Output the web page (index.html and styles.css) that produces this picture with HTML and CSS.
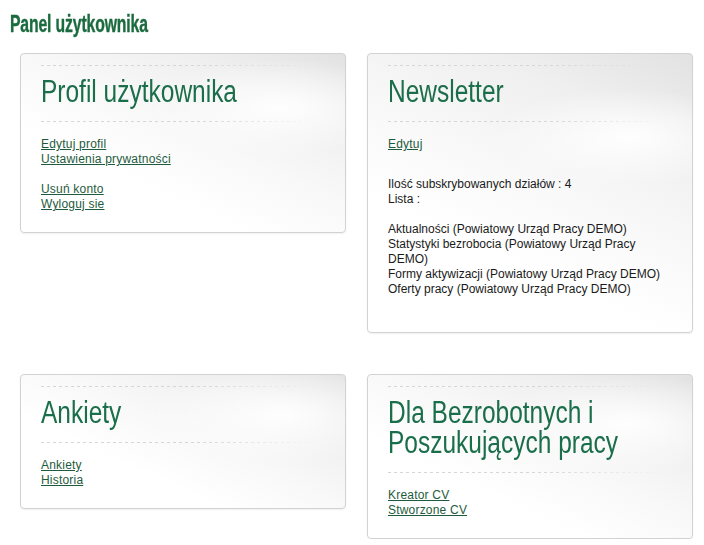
FILE: index.html
```html
<!DOCTYPE html>
<html lang="pl">
<head>
<meta charset="utf-8">
<title>Panel użytkownika</title>
<link rel="stylesheet" href="styles.css">
</head>
<body>
<h1 class="page-title"><span class="narrow-bold">Panel użytkownika</span></h1>
<div class="grid">
  <section class="card">
    <div class="card-head"><h2 class="card-title">Profil użytkownika</h2></div>
    <div class="card-body">
      <a href="#">Edytuj profil</a><br>
      <a href="#">Ustawienia prywatności</a><br>
      <br>
      <a href="#">Usuń konto</a><br>
      <a href="#">Wyloguj sie</a>
    </div>
  </section>
  <section class="card">
    <div class="card-head"><h2 class="card-title">Newsletter</h2></div>
    <div class="card-body">
      <a href="#">Edytuj</a>
      <p class="news">Ilość subskrybowanych działów : 4<br>
      Lista :<br>
      <br>
      Aktualności (Powiatowy Urząd Pracy DEMO)<br>
      Statystyki bezrobocia (Powiatowy Urząd Pracy DEMO)<br>
      Formy aktywizacji (Powiatowy Urząd Pracy DEMO)<br>
      Oferty pracy (Powiatowy Urząd Pracy DEMO)<br>
      <br></p>
    </div>
  </section>
  <section class="card">
    <div class="card-head"><h2 class="card-title">Ankiety</h2></div>
    <div class="card-body">
      <a href="#">Ankiety</a><br>
      <a href="#">Historia</a>
    </div>
  </section>
  <section class="card">
    <div class="card-head"><h2 class="card-title">Dla Bezrobotnych i Poszukujących pracy</h2></div>
    <div class="card-body">
      <a href="#">Kreator CV</a><br>
      <a href="#">Stworzone CV</a>
    </div>
  </section>
</div>
</body>
</html>
```
FILE: styles.css
```css
html, body {
  margin: 0;
  padding: 0;
  background: #ffffff;
}
body {
  font-family: "Liberation Sans", Arial, sans-serif;
  font-size: 12px;
  line-height: 15px;
  color: #1a1a1a;
  padding: 11px 0 0 10px;
}
.page-title {
  margin: 0;
  font-family: "Liberation Sans", Arial, sans-serif;
  font-weight: bold;
  font-size: 23px;
  line-height: 26px;
  color: #1b6b3f;
}
.narrow-bold {
  display: inline-block;
  transform: scaleX(0.685);
  transform-origin: 0 0;
  letter-spacing: -0.2px;
  -webkit-text-stroke: 0.4px #1b6b3f;
}
.grid {
  display: grid;
  grid-template-columns: 326px 326px;
  column-gap: 21px;
  row-gap: 41px;
  align-items: start;
  margin: 16px 0 0 10px;
}
.card {
  border: 1px solid #d2d2d2;
  border-radius: 4px;
  padding: 11px 25px 20px 20px;
  background:
    radial-gradient(ellipse 190px 70px at 80% 30%, rgba(255,255,255,0.95), rgba(255,255,255,0) 70%),
    linear-gradient(205deg, #e2e2e2 0%, #efefef 22%, #f8f8f8 45%, #ffffff 68%);
  box-shadow: 0 1px 2px rgba(0,0,0,0.06);
  overflow: hidden;
}
.card-head {
  position: relative;
  padding: 12px 0 15px 0;
}
.card-head::before,
.card-head::after {
  content: "";
  position: absolute;
  left: 0;
  right: 0;
  height: 1px;
  background: repeating-linear-gradient(90deg, #d6d6d6 0 3px, transparent 3px 6px);
  -webkit-mask-image: linear-gradient(90deg, #000 0%, #000 55%, transparent 100%);
  mask-image: linear-gradient(90deg, #000 0%, #000 55%, transparent 100%);
}
.card-head::before { top: 0; }
.card-head::after { bottom: 0; }
.card-title {
  margin: 0;
  width: 126.6%;
  transform: scaleX(0.79);
  transform-origin: 0 0;
  font-family: "Liberation Sans", Arial, sans-serif;
  font-weight: normal;
  font-size: 31px;
  line-height: 30px;
  color: #1a6e4a;
}
.card-body {
  margin-top: 15px;
}
.card-body a {
  color: #1e5b3c;
  text-decoration: underline;
  letter-spacing: 0.2px;
}
.news {
  margin: 25px 0 0 0;
}
```
